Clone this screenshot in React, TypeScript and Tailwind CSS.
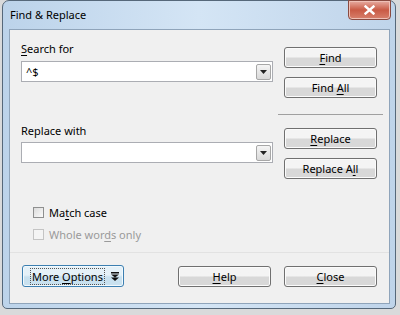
import React from "react";

const font = { fontFamily: '"Noto Sans", "Open Sans", Arial, sans-serif' };

const Btn = ({
  children,
  className = "",
}: {
  children: React.ReactNode;
  className?: string;
}) => (
  <button
    className={`h-[21px] w-[93px] rounded-[3px] border border-[#707070] bg-linear-to-b from-[#f4f4f4] from-45% to-[#d8d8d8] to-55% text-[11px] leading-none text-black shadow-[inset_0_0_0_1px_#fbfbfb] ${className}`}
  >
    {children}
  </button>
);

const U = ({ children }: { children: React.ReactNode }) => (
  <span className="underline underline-offset-2">{children}</span>
);

const Combo = ({ value }: { value?: string }) => (
  <div className="flex h-[21px] w-[252px] items-center border border-[#abadb3] bg-white pl-[4px] pr-[1px]">
    <span className="flex-1 text-[11px] leading-none text-black">{value}</span>
    <div className="flex h-[16px] w-[15px] items-center justify-center rounded-[2px] border border-[#a7a7a7] bg-linear-to-b from-[#f5f5f5] to-[#d9d9d9]">
      <svg width="7" height="4" viewBox="0 0 7 4">
        <path d="M0 0h7L3.5 4z" fill="#222" />
      </svg>
    </div>
  </div>
);

const Check = ({
  label,
  disabled = false,
}: {
  label: React.ReactNode;
  disabled?: boolean;
}) => (
  <div className="flex h-[16px] items-center">
    <div
      className={`h-[11px] w-[11px] border ${
        disabled
          ? "border-[#c4c4c4] bg-[#f4f4f4]"
          : "border-[#8e8f8f] bg-linear-to-br from-[#dcdcdc] to-[#fafafa]"
      }`}
    />
    <span
      className={`ml-[5px] text-[11px] leading-none ${
        disabled ? "text-[#9a9a9a]" : "text-black"
      }`}
    >
      {label}
    </span>
  </div>
);

export default function App() {
  return (
    <div className="h-[315px] w-[400px] overflow-hidden bg-[#d9dadb]" style={font}>
      <div className="relative ml-[2px] h-[309px] w-[394px] rounded-t-[7px] rounded-b-[5px] border border-[#56687a] bg-linear-to-r from-[#bcd3ea] via-[#d4e5f5] to-[#bfd4ea]">
        {/* title bar */}
        <div className="flex h-[28px] items-center pl-[7px] text-[11px] text-black">
          Find &amp; Replace
        </div>
        <div className="absolute right-[4px] top-[-1px] flex h-[20px] w-[43px] items-center justify-center rounded-b-[4px] border border-[#8a4a40] bg-linear-to-b from-[#e6aca2] via-[#c95a45] to-[#d7806c] shadow-[inset_0_0_0_1px_#efc0b6]">
          <svg width="11" height="10" viewBox="0 0 11 10">
            <path
              d="M1.5 1.5l8 7M9.5 1.5l-8 7"
              stroke="#fff"
              strokeWidth="2.4"
              strokeLinecap="square"
            />
          </svg>
        </div>

        {/* client area */}
        <div className="ml-[6px] h-[275px] w-[381px] border border-[#8fa4ba] bg-[#f0f0f0] text-[11px] text-black">
          <div className="flex pl-[11px]">
            <div className="w-[252px]">
              <div className="mt-[11px] h-[16px] leading-[16px]">
                <U>S</U>earch for
              </div>
              <div className="mt-[4px]">
                <Combo value="^$" />
              </div>
              <div className="mt-[41px] h-[16px] leading-[16px]">Replace with</div>
              <div className="mt-[3px]">
                <Combo />
              </div>
              <div className="ml-[12px] mt-[41px]">
                <Check
                  label={
                    <>
                      Ma<U>t</U>ch case
                    </>
                  }
                />
              </div>
              <div className="ml-[12px] mt-[6px]">
                <Check
                  disabled
                  label={
                    <>
                      Whole wor<U>d</U>s only
                    </>
                  }
                />
              </div>
            </div>
            <div className="ml-[11px] flex w-[93px] flex-col">
              <Btn className="mt-[17px]">
                <U>F</U>ind
              </Btn>
              <Btn className="mt-[9px]">
                Find <U>A</U>ll
              </Btn>
              <div className="-ml-[6px] mt-[16px] h-px w-[105px] bg-[#a0a0a0]" />
              <Btn className="mt-[13px]">
                <U>R</U>eplace
              </Btn>
              <Btn className="mt-[9px]">
                Replace A<U>l</U>l
              </Btn>
            </div>
          </div>

          <div className="mt-[10px] h-px w-full bg-[#e2e2e2]" />

          <div className="mt-[12px] flex items-start pl-[12px]">
            <button className="flex h-[22px] w-[102px] items-center rounded-[3px] border border-[#3c7fb1] bg-linear-to-b from-[#e5f1f8] from-45% to-[#c9e1ef] to-55% pl-[8px] text-[11px] leading-none text-black shadow-[inset_0_0_0_1px_#f2f9fd]">
              <span className="px-[1px] py-[2px] outline-1 outline-dotted outline-[#555]">
                More <U>O</U>ptions
              </span>
              <svg className="ml-[7px]" width="8" height="9" viewBox="0 0 8 9">
                <path d="M0 0h8v1.6H0z M0 2.5h8L4 5.5z M0 5.5h8L4 9z" fill="#111" />
              </svg>
            </button>
            <Btn className="ml-[54px] mt-[1px]">
              <U>H</U>elp
            </Btn>
            <Btn className="ml-[13px] mt-[1px]">
              <U>C</U>lose
            </Btn>
          </div>
        </div>
      </div>
    </div>
  );
}
